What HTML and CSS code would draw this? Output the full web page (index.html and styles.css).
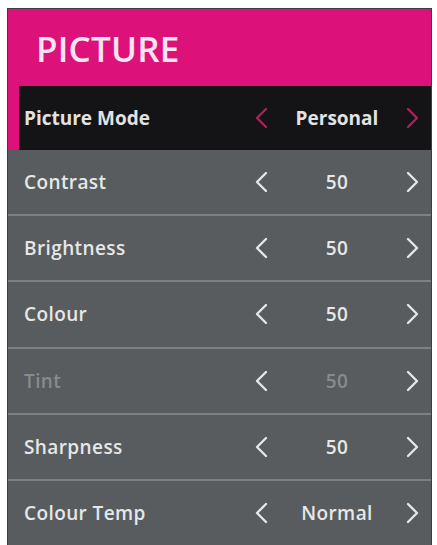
FILE: index.html
```html
<!DOCTYPE html>
<html>
<head>
<meta charset="utf-8">
<link rel="stylesheet" href="styles.css">
</head>
<body>
<div class="panel">
  <div class="header">PICTURE</div>
  <div class="rows">
    <div class="row selected">
      <span class="label">Picture Mode</span>
      <svg class="chev" viewBox="0 0 14 22"><polyline points="12,2 3,11 12,20"/></svg>
      <span class="value">Personal</span>
      <svg class="chev" viewBox="0 0 14 22"><polyline points="2,2 11,11 2,20"/></svg>
    </div>
    <div class="row">
      <span class="label">Contrast</span>
      <svg class="chev" viewBox="0 0 14 22"><polyline points="12,2 3,11 12,20"/></svg>
      <span class="value">50</span>
      <svg class="chev" viewBox="0 0 14 22"><polyline points="2,2 11,11 2,20"/></svg>
    </div>
    <div class="row">
      <span class="label">Brightness</span>
      <svg class="chev" viewBox="0 0 14 22"><polyline points="12,2 3,11 12,20"/></svg>
      <span class="value">50</span>
      <svg class="chev" viewBox="0 0 14 22"><polyline points="2,2 11,11 2,20"/></svg>
    </div>
    <div class="row">
      <span class="label">Colour</span>
      <svg class="chev" viewBox="0 0 14 22"><polyline points="12,2 3,11 12,20"/></svg>
      <span class="value">50</span>
      <svg class="chev" viewBox="0 0 14 22"><polyline points="2,2 11,11 2,20"/></svg>
    </div>
    <div class="row disabled">
      <span class="label">Tint</span>
      <svg class="chev" viewBox="0 0 14 22"><polyline points="12,2 3,11 12,20"/></svg>
      <span class="value">50</span>
      <svg class="chev" viewBox="0 0 14 22"><polyline points="2,2 11,11 2,20"/></svg>
    </div>
    <div class="row">
      <span class="label">Sharpness</span>
      <svg class="chev" viewBox="0 0 14 22"><polyline points="12,2 3,11 12,20"/></svg>
      <span class="value">50</span>
      <svg class="chev" viewBox="0 0 14 22"><polyline points="2,2 11,11 2,20"/></svg>
    </div>
    <div class="row">
      <span class="label">Colour Temp</span>
      <svg class="chev" viewBox="0 0 14 22"><polyline points="12,2 3,11 12,20"/></svg>
      <span class="value">Normal</span>
      <svg class="chev" viewBox="0 0 14 22"><polyline points="2,2 11,11 2,20"/></svg>
    </div>
  </div>
</div>
</body>
</html>
```
FILE: styles.css
```css
html, body {
  margin: 0;
  padding: 0;
  background: #ffffff;
}
body {
  padding: 8px 0 0 7px;
  font-family: "Open Sans", "DejaVu Sans", sans-serif;
}
.panel {
  width: 423px;
  height: 536px;
  border: 1.5px solid #3c3e40;
  border-bottom: 0;
  display: flex;
  flex-direction: column;
  background: #585c5e;
}
.header {
  height: 77px;
  flex: none;
  background: #dc127a;
  color: #fbe4f0;
  font-size: 35px;
  font-weight: 600;
  line-height: 1;
  padding-left: 28px;
  display: flex;
  align-items: center;
  padding-top: 2px;
  box-sizing: border-box;
  letter-spacing: 0.2px;
}
.rows {
  flex: 1;
  display: flex;
  flex-direction: column;
}
.row {
  flex: 1;
  display: grid;
  grid-template-columns: 1fr 14px 138px 14px;
  align-items: center;
  padding: 0 11px 0 16px;
  border-top: 2px solid #7b8082;
  color: #e6e7e7;
  font-size: 19px;
  font-weight: 600;
  letter-spacing: 0.4px;
}
.row.selected {
  border-top: 0;
  background: #141416;
  border-left: 11px solid #dc127a;
  padding-left: 5px;
  font-weight: 700;
  letter-spacing: 0;
  color: #e2e2e2;
}
.row.selected + .row {
  border-top: 0;
}
.value {
  text-align: center;
}
.chev {
  width: 14px;
  height: 22px;
  fill: none;
  stroke: #e6e6e6;
  stroke-width: 2.4;
  stroke-linecap: round;
  stroke-linejoin: round;
}
.row.selected .chev {
  stroke: #ab2259;
}
.row.disabled .label,
.row.disabled .value {
  color: #868b8d;
}
```
